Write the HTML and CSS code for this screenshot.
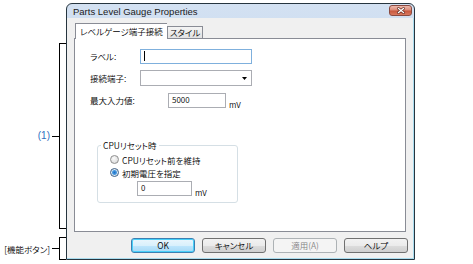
FILE: index.html
```html
<!DOCTYPE html>
<html lang="ja">
<head>
  <meta charset="UTF-8" />
  <title>Parts Level Gauge Properties</title>
  <link rel="stylesheet" href="styles.css">
</head>
<body>
  <div class="figure">

    <!-- 注釈 (左側の括弧) -->
    <div class="notes">
      <div class="note note-main">
        <span class="note-label blue">(1)</span>
        <span class="note-tick"></span>
        <span class="note-bracket"></span>
      </div>
      <div class="note note-buttons">
        <span class="note-label">[機能ボタン]</span>
        <span class="note-tick"></span>
        <span class="note-bracket"></span>
      </div>
    </div>

    <!-- ダイアログ -->
    <div class="window">
      <div class="titlebar">
        <span class="title">Parts Level Gauge Properties</span>
        <span class="btn-close">
          <svg viewBox="0 0 8 7" width="8" height="7">
            <path d="M1.5 1.5 L6.5 5.5 M6.5 1.5 L1.5 5.5" stroke="#5a1f16" stroke-width="2.6" stroke-linecap="square"/>
            <path d="M1.5 1.5 L6.5 5.5 M6.5 1.5 L1.5 5.5" stroke="#fff" stroke-width="1.4" stroke-linecap="square"/>
          </svg>
        </span>
      </div>

      <div class="client">
        <div class="tabs">
          <div class="tab active">レベルゲージ端子接続</div>
          <div class="tab">スタイル</div>
        </div>

        <div class="panel">
          <div class="row">
            <span class="lbl">ラベル:</span>
            <div class="textbox focus wide"><span class="caret"></span></div>
          </div>
          <div class="row">
            <span class="lbl">接続端子:</span>
            <div class="combo wide">
              <svg class="combo-arrow" viewBox="0 0 5 3" width="5" height="3">
                <path d="M0 0 H5 L2.5 3 Z" fill="#000"/>
              </svg>
            </div>
          </div>
          <div class="row">
            <span class="lbl lbl-long">最大入力値:</span>
            <div class="textbox small">5000</div>
            <span class="unit">mV</span>
          </div>

          <!-- CPUリセット時 グループ -->
          <fieldset class="group">
            <legend>CPUリセット時</legend>
            <div class="options">
              <div class="radio-row">
                <span class="radio"></span>
                <span>CPUリセット前を維持</span>
              </div>
              <div class="radio-row">
                <span class="radio checked"></span>
                <span>初期電圧を指定</span>
              </div>
              <div class="sub-row">
                <div class="textbox tiny">0</div>
                <span class="unit">mV</span>
              </div>
            </div>
          </fieldset>
        </div>

        <div class="buttons">
          <span class="btn default">OK</span>
          <span class="btn">キャンセル</span>
          <span class="btn disabled">適用(A)</span>
          <span class="btn">ヘルプ</span>
        </div>
      </div>
    </div>

  </div>
</body>
</html>
```

FILE: styles.css
```css
/* ダイアログのスクリーンショット再現 */
:root {
  --client-bg: #f0f0f0;
  --tab-border: #898c95;
  --box-border: #abadb3;
  --frame-dark: #26353f;
}

* {
  box-sizing: border-box;
  margin: 0;
  padding: 0;
}
body {
  background: #fff;
  font-family: "Noto Sans CJK JP", "Noto Sans", sans-serif;
  font-size: 8.5px;
  font-weight: 350;
  font-feature-settings: "palt";
  color: #000;
  line-height: 12px;
}

.figure {
  display: flex;
  width: 473px;
  height: 264px;
}

/* 注釈 */
.notes {
  width: 66px;
  padding-top: 43px;
  display: flex;
  flex-direction: column;
  gap: 8px;
}
.note {
  display: flex;
  align-items: center;
  justify-content: flex-end;
}
.note-main {
  height: 186px;
}
.note-buttons {
  height: 23px;
}
.note-label {
  margin-right: 2px;
  white-space: nowrap;
}
.note-label.blue {
  color: #2f6fc0;
  font-family: "Liberation Sans", sans-serif;
  font-size: 10px;
  font-weight: 400;
}
.note-tick {
  width: 7px;
  height: 1px;
  background: #000;
}
.note-bracket {
  align-self: stretch;
  width: 7px;
  border: 1px solid #000;
  border-right: none;
}

/* ウィンドウ枠 */
.window {
  margin-top: 3px;
  width: 349px;
  height: 257px;
  border: 1px solid var(--frame-dark);
  border-radius: 6px 6px 0 0;
  background: linear-gradient(#d3e1f2, #bfd3ea 60%, #b4cbe7);
  display: flex;
  flex-direction: column;
}
.titlebar {
  height: 14px;
  display: flex;
  justify-content: space-between;
}
.title {
  font-family: "Liberation Sans", sans-serif;
  font-size: 9.5px;
  font-weight: 400;
  line-height: 15px;
  padding-left: 6px;
  font-feature-settings: normal;
  color: #1a1a1a;
}
.btn-close {
  margin: 1px 2px 0 0;
  width: 23px;
  height: 11px;
  border: 1px solid #8a4a40;
  border-radius: 3px;
  background: linear-gradient(#edb9ad, #dc8c79 45%, #c8583e 55%, #d9795f);
  display: flex;
  align-items: center;
  justify-content: center;
}

.client {
  flex: 1;
  background: var(--client-bg);
  border-right: 1px solid #a9dcee;
  border-bottom: 1px solid #a9dcee;
  padding: 5px 7px 5px 7px;
  display: flex;
  flex-direction: column;
}

/* タブ */
.tabs {
  height: 15px;
  display: flex;
  align-items: flex-end;
  padding-left: 1px;
}
.tab {
  height: 12px;
  padding: 0 2px;
  line-height: 11px;
  border: 1px solid var(--tab-border);
  border-bottom: none;
  background: linear-gradient(#f4f4f4, #e2e2e2);
  white-space: nowrap;
}
.tab.active {
  height: 16px;
  margin-bottom: -1px;
  padding: 0 4px;
  line-height: 14px;
  background: #fff;
  position: relative;
  z-index: 1;
  border-right: none;
}

.panel {
  height: 194px;
  background: #fff;
  border: 1px solid var(--tab-border);
  padding: 9px 0 0 15px;
}

/* フォーム行 */
.row {
  height: 16px;
  display: flex;
  align-items: center;
  margin-bottom: 6px;
}
.lbl {
  width: 50px;
}
.lbl-long {
  width: 78px;
}
.textbox,
.combo {
  height: 16px;
  background: #fff;
  border: 1px solid var(--box-border);
  padding: 0 3px;
  line-height: 12px;
  font-size: 8px;
}
.textbox.focus {
  border-color: #7fb0dd;
  height: 15px;
}
.wide {
  width: 112px;
}
.small {
  width: 58px;
  height: 15px;
}
.tiny {
  width: 55px;
  height: 15px;
}
.caret {
  display: inline-block;
  width: 1px;
  height: 10px;
  margin-top: 1px;
  background: #000;
}
.combo {
  display: flex;
  align-items: center;
  justify-content: flex-end;
  padding-right: 4px;
}
.unit {
  align-self: flex-end;
  margin-left: 3px;
  margin-bottom: -3px;
  font-size: 8px;
}

/* グループボックス */
.group {
  margin: 31px 0 0 7px;
  width: 141px;
  height: 64px;
  border: 1px solid #d5dfe5;
  border-radius: 3px;
  padding: 0 6px 6px 3px;
}
.group legend {
  padding: 0 2px;
  line-height: 12px;
}
.options {
  margin-left: 9px;
  margin-top: 2px;
}
.radio-row {
  height: 13px;
  display: flex;
  align-items: center;
  gap: 3px;
}
.radio {
  width: 9px;
  height: 9px;
  border-radius: 50%;
  border: 1px solid #8f8f8f;
  background: radial-gradient(circle at 40% 35%, #fafafa, #d4d4d4);
}
.radio.checked {
  background: radial-gradient(circle, #1d6fc6 0, #4a9be0 2px, #dfe9f3 3px, #f5f5f5 4px);
  border-color: #3c5f86;
}
.sub-row {
  display: flex;
  margin: 2px 0 0 27px;
}

/* 機能ボタン */
.buttons {
  margin-top: 6px;
  display: flex;
  justify-content: flex-end;
  gap: 7px;
  margin-right: -2px;
}
.btn {
  width: 64px;
  height: 15px;
  border: 1px solid #707070;
  border-radius: 3px;
  background: linear-gradient(#f2f2f2, #ebebeb 50%, #dddddd 51%, #cfcfcf);
  text-align: center;
  line-height: 13px;
}
.btn.default {
  border-color: #3c7fb1;
  background: linear-gradient(#eaf6fd, #d9f0fc 50%, #bee6fd 51%, #a7d9f5);
  box-shadow: inset 0 0 0 1px #48d0f9;
}
.btn.disabled {
  border-color: #adb2b5;
  background: #f4f4f4;
  color: #838383;
}
```
